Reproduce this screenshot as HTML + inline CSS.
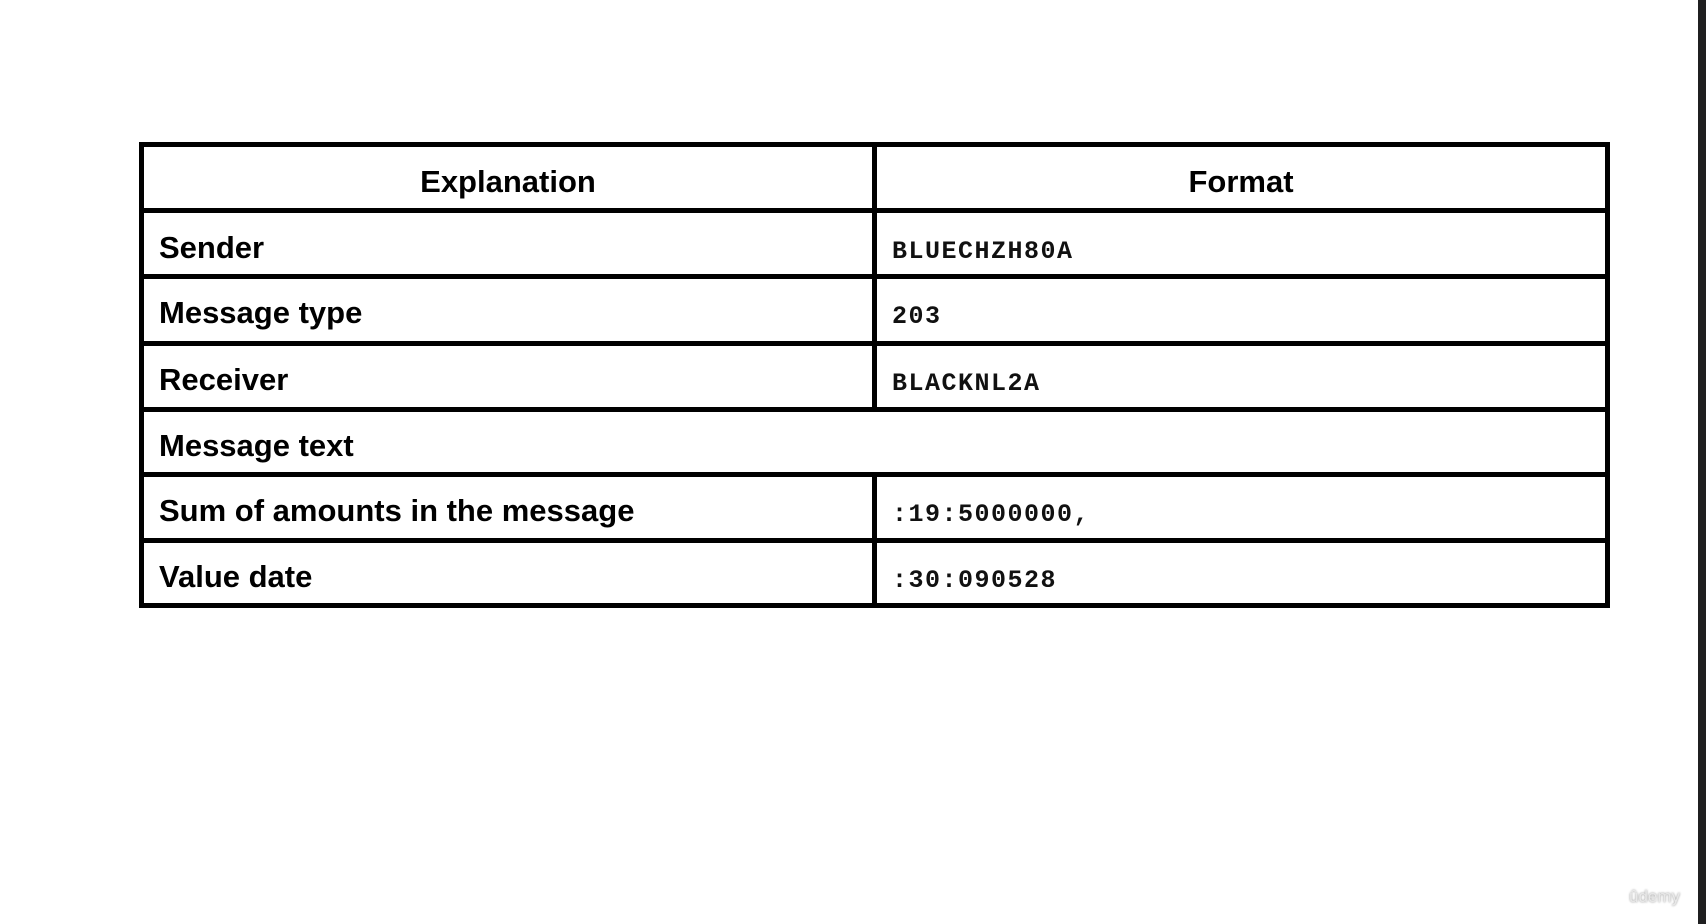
<!DOCTYPE html><html><head><style>
body{margin:0;width:1706px;height:924px;background:#fff;position:relative;overflow:hidden}
.h{position:absolute;left:139px;width:1471px;height:5px;background:#000}
.v{position:absolute;width:5px;background:#000}
.t{position:absolute;font:bold 31px "Liberation Sans",sans-serif;color:#000;line-height:1;white-space:nowrap}
.m{position:absolute;font:bold 25px "Liberation Mono",monospace;color:#111;letter-spacing:1.5px;line-height:1;white-space:nowrap}
</style></head><body>
<div class="h" style="top:142px"></div>
<div class="h" style="top:208px"></div>
<div class="h" style="top:274px"></div>
<div class="h" style="top:341px"></div>
<div class="h" style="top:407px"></div>
<div class="h" style="top:472px"></div>
<div class="h" style="top:538px"></div>
<div class="h" style="top:603px"></div>
<div class="v" style="left:139px;top:142px;height:466px"></div>
<div class="v" style="left:1605px;top:142px;height:466px"></div>
<div class="v" style="left:872px;top:142px;height:268px"></div>
<div class="v" style="left:872px;top:472px;height:136px"></div>
<div class="t" style="left:144px;width:728px;text-align:center;top:166px">Explanation</div>
<div class="t" style="left:877px;width:728px;text-align:center;top:166px">Format</div>
<div class="t" style="left:159px;top:232px">Sender</div>
<div class="t" style="left:159px;top:297px">Message type</div>
<div class="t" style="left:159px;top:364px">Receiver</div>
<div class="t" style="left:159px;top:430px">Message text</div>
<div class="t" style="left:159px;top:495px">Sum of amounts in the message</div>
<div class="t" style="left:159px;top:561px">Value date</div>
<div class="m" style="left:892px;top:239px">BLUECHZH80A</div>
<div class="m" style="left:892px;top:304px">203</div>
<div class="m" style="left:892px;top:371px">BLACKNL2A</div>
<div class="m" style="left:892px;top:502px">:19:5000000,</div>
<div class="m" style="left:892px;top:568px">:30:090528</div>
<div style="position:absolute;left:1629px;top:887px;font:17px 'Liberation Sans',sans-serif;color:#e8e8e8;text-shadow:0 0 2px #888">ûdemy</div>
<div style="position:absolute;left:1698px;top:0;width:8px;height:924px;background:#1f1f20"></div>
</body></html>
